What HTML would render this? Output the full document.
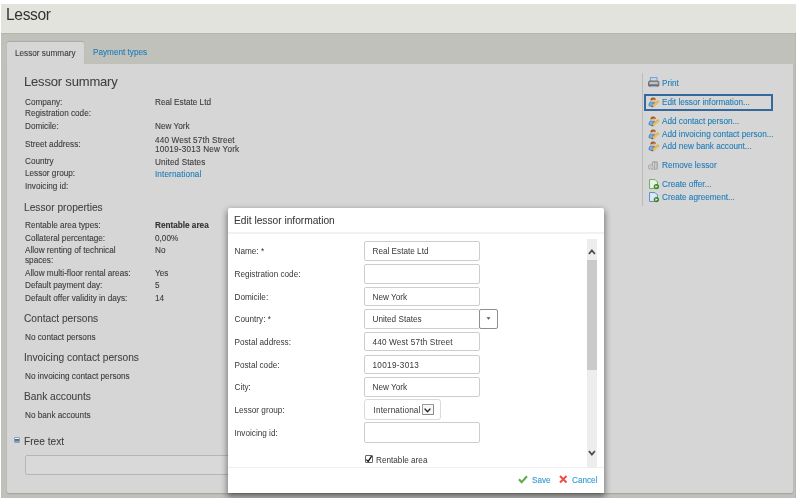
<!DOCTYPE html>
<html><head><meta charset="utf-8">
<style>
*{box-sizing:border-box;margin:0;padding:0}
html,body{width:799px;height:502px;overflow:hidden;background:#fff;font-family:"Liberation Sans",sans-serif;color:#444}
#root{position:absolute;left:0;top:0;width:799px;height:502px;will-change:transform;overflow:hidden}
.a{position:absolute}
.t{position:absolute;white-space:nowrap;font-size:8.2px;line-height:10px;color:#3c3c3c;-webkit-text-stroke:0.1px currentColor}
.l{color:#1f7db9}
.d{color:#363636;-webkit-text-stroke:0}
.h1{position:absolute;white-space:nowrap;font-size:13px;letter-spacing:-0.3px;line-height:16px;color:#404040;-webkit-text-stroke:0.06px currentColor}
.h2{position:absolute;white-space:nowrap;font-size:10.2px;line-height:12px;color:#404040;-webkit-text-stroke:0.06px currentColor}
.inp{position:absolute;background:#fff;border:1px solid #cdcdcd;border-radius:2px}
.act{position:absolute;white-space:nowrap;font-size:8.2px;line-height:10px;color:#1f7db9;-webkit-text-stroke:0.1px currentColor}
svg{position:absolute;overflow:visible}
</style></head><body><div id="root">
<div class="a" style="left:1px;top:4px;width:795px;height:28.5px;background:#e3e3de"></div>
<div class="t" style="left:6px;top:6.3px;font-size:15.6px;letter-spacing:-0.35px;line-height:18px;color:#333;-webkit-text-stroke:0">Lessor</div>
<div class="a" style="left:1px;top:32.5px;width:795px;height:465px;background:#c1c1bc;box-shadow:inset 0 1px 1px rgba(0,0,0,.06), inset -1px 0 1px rgba(0,0,0,.05)"></div>
<div class="a" style="left:7px;top:63.5px;width:785.5px;height:429.5px;background:#d6d6d6;border-radius:0 0 2px 2px;box-shadow:0 1px 1.5px rgba(0,0,0,.18)"></div>
<div class="a" style="left:7px;top:42px;width:77px;height:22px;background:#d6d6d6;border-radius:2px 2px 0 0;box-shadow:0 -0.5px 1px rgba(0,0,0,.12)"></div><div class="a" style="left:7px;top:63px;width:77px;height:2px;background:#d6d6d6"></div>
<div class="t" style="left:15px;top:49px">Lessor summary</div>
<div class="t l" style="left:93px;top:48px">Payment types</div>

<div class="h1" style="left:24px;top:73.6px;letter-spacing:-0.18px">Lessor summary</div>
<div class="t" style="left:25px;top:97.5px">Company:</div><div class="t" style="left:155px;top:97.5px">Real Estate Ltd</div>
<div class="t" style="left:25px;top:109px">Registration code:</div>
<div class="t" style="left:25px;top:122px">Domicile:</div><div class="t" style="left:155px;top:122px">New York</div>
<div class="t" style="left:25px;top:140px">Street address:</div><div class="t" style="left:155px;top:135.5px;letter-spacing:0.15px">440 West 57th Street</div>
<div class="t" style="left:155px;top:145px;letter-spacing:0.2px">10019-3013 New York</div>
<div class="t" style="left:25px;top:157px">Country</div><div class="t" style="left:155px;top:157.5px;letter-spacing:0.1px">United States</div>
<div class="t" style="left:25px;top:169px">Lessor group:</div><div class="t l" style="left:155px;top:169.5px;letter-spacing:0.1px">International</div>
<div class="t" style="left:25px;top:182px">Invoicing id:</div>

<div class="h2" style="left:24px;top:201.5px">Lessor properties</div>
<div class="t" style="left:25px;top:221px">Rentable area types:</div><div class="t" style="left:155px;top:221px;font-weight:bold;color:#333">Rentable area</div>
<div class="t" style="left:25px;top:233.5px">Collateral percentage:</div><div class="t" style="left:155px;top:233.5px">0,00%</div>
<div class="t" style="left:25px;top:246px">Allow renting of technical</div><div class="t" style="left:155px;top:246px">No</div>
<div class="t" style="left:25px;top:255.5px">spaces:</div>
<div class="t" style="left:25px;top:268.5px">Allow multi-floor rental areas:</div><div class="t" style="left:155px;top:268.5px">Yes</div>
<div class="t" style="left:25px;top:281px">Default payment day:</div><div class="t" style="left:155px;top:281px">5</div>
<div class="t" style="left:25px;top:293.5px">Default offer validity in days:</div><div class="t" style="left:155px;top:293.5px">14</div>

<div class="h2" style="left:24px;top:312.5px">Contact persons</div>
<div class="t" style="left:25px;top:333px">No contact persons</div>
<div class="h2" style="left:24px;top:351.5px">Invoicing contact persons</div>
<div class="t" style="left:25px;top:372px">No invoicing contact persons</div>
<div class="h2" style="left:24px;top:390.5px">Bank accounts</div>
<div class="t" style="left:25px;top:411px">No bank accounts</div>

<div class="a" style="left:13.8px;top:436.9px;width:6.1px;height:5.9px;border:1px solid #77a3d2;background:linear-gradient(#f4f4f4 0,#f4f4f4 25%,#4a4a4a 40%,#7a7a72 65%,#b8b8b0 100%);border-radius:1px"></div>
<div class="h2" style="left:24px;top:435.5px">Free text</div>
<div class="a" style="left:25px;top:455px;width:560px;height:19.5px;border:1px solid #b6b6b6;border-radius:2px;background:#d9d9d9"></div>

<!-- actions -->
<div class="a" style="left:642px;top:73px;width:1px;height:133px;background:#bbb"></div>
<div class="act" style="left:662px;top:79px">Print</div>
<div class="a" style="left:644px;top:94px;width:129px;height:16.5px;border:2px solid #35689d"></div>
<div class="act" style="left:662px;top:98px">Edit lessor information...</div>
<div class="act" style="left:662px;top:116.5px">Add contact person...</div>
<div class="act" style="left:662px;top:129.5px">Add invoicing contact person...</div>
<div class="act" style="left:662px;top:142px">Add new bank account...</div>
<div class="act" style="left:662px;top:161px">Remove lessor</div>
<div class="act" style="left:662px;top:180px">Create offer...</div>
<div class="act" style="left:662px;top:193px">Create agreement...</div>

<!-- dialog -->
<div class="a" style="left:227.5px;top:207.5px;width:376px;height:285px;background:#fff;border-radius:2px 2px 0 0;box-shadow:0 3px 6px 1px rgba(0,0,0,.45)"></div>
<div class="h2" style="left:234px;top:214.5px;color:#3a3a3a">Edit lessor information</div>
<div class="a" style="left:227.5px;top:232px;width:376px;height:2px;background:#f1f1f1"></div>

<div class="t d" style="left:234.5px;top:247px">Name: *</div>
<div class="t d" style="left:234.5px;top:270px">Registration code:</div>
<div class="t d" style="left:234.5px;top:292.5px">Domicile:</div>
<div class="t d" style="left:234.5px;top:315px">Country: *</div>
<div class="t d" style="left:234.5px;top:338px">Postal address:</div>
<div class="t d" style="left:234.5px;top:360.5px">Postal code:</div>
<div class="t d" style="left:234.5px;top:383px">City:</div>
<div class="t d" style="left:234.5px;top:406px">Lessor group:</div>
<div class="t d" style="left:234.5px;top:428.5px">Invoicing id:</div>

<div class="inp" style="left:364px;top:241px;width:116px;height:19.5px"></div>
<div class="t d" style="left:372.5px;top:247px">Real Estate Ltd</div>
<div class="inp" style="left:364px;top:264px;width:116px;height:19.5px"></div>
<div class="inp" style="left:364px;top:286.5px;width:116px;height:19.5px"></div>
<div class="t d" style="left:372.5px;top:292.5px">New York</div>
<div class="inp" style="left:364px;top:309px;width:116px;height:19.5px"></div>
<div class="t d" style="left:372.5px;top:315px">United States</div>
<div class="a" style="left:479px;top:309px;width:19px;height:19.5px;border:1px solid #8f8f8f;border-radius:2px;background:#fff"></div>
<svg style="left:486px;top:317px" width="5" height="3"><path d="M0.5 0.3 L4.5 0.3 L2.5 2.8 Z" fill="#555"/></svg>
<div class="inp" style="left:364px;top:331.5px;width:116px;height:19.5px"></div>
<div class="t d" style="left:372.5px;top:338px;letter-spacing:0.17px">440 West 57th Street</div>
<div class="inp" style="left:364px;top:354.5px;width:116px;height:19.5px"></div>
<div class="t d" style="left:372.5px;top:360.5px;letter-spacing:0.3px">10019-3013</div>
<div class="inp" style="left:364px;top:377px;width:116px;height:19.5px"></div>
<div class="t d" style="left:372.5px;top:383px">New York</div>
<div class="a" style="left:364px;top:399.2px;width:77px;height:20.4px;border:1.5px solid #dadada;border-radius:3px;background:#fff"></div>
<div class="t d" style="left:373.5px;top:406px;letter-spacing:0.15px">International</div>
<div class="a" style="left:422px;top:404.2px;width:11.5px;height:11.2px;border:1px solid #9a9a9a;border-right:1.3px solid #8a8a8a;border-bottom:1.6px solid #8a8a8a;background:#f7f7f7;border-radius:1px"></div>
<svg style="left:424px;top:407.5px" width="8" height="5"><path d="M0.6 0.6 L3.5 3.8 L6.4 0.6" fill="none" stroke="#222" stroke-width="1.4"/></svg>
<div class="inp" style="left:364px;top:422px;width:116px;height:20.5px"></div>
<div class="a" style="left:364.5px;top:454.5px;width:8.5px;height:8.5px;border:1px solid #666;border-radius:1px;background:#fff"></div>
<svg style="left:365px;top:455px" width="8" height="8"><path d="M1.3 4.6 L3.2 6.4 L6.6 1.2" fill="none" stroke="#111" stroke-width="1.3"/></svg>
<div class="t d" style="left:376px;top:456px">Rentable area</div>

<!-- scrollbar -->
<div class="a" style="left:587px;top:239px;width:10px;height:227.5px;background:#ededed"></div>
<div class="a" style="left:587px;top:260px;width:9.5px;height:110px;background:#cacaca"></div>
<svg style="left:588px;top:249.3px" width="8" height="6"><path d="M0.9 5 L3.9 1.4 L6.9 5" fill="none" stroke="#4a4a4a" stroke-width="1.7"/></svg>
<svg style="left:588px;top:450.3px" width="8" height="6"><path d="M0.9 1 L3.9 4.6 L6.9 1" fill="none" stroke="#4a4a4a" stroke-width="1.7"/></svg>

<div class="a" style="left:227.5px;top:466.5px;width:376px;height:1px;background:#efefef"></div>
<svg style="left:518px;top:474.8px" width="10" height="9"><path d="M1 4.3 L3.6 7.2 L9 1.2" fill="none" stroke="#62ab4a" stroke-width="2.1"/></svg>
<div class="act" style="left:532px;top:476px;color:#3199d4">Save</div>
<svg style="left:558.8px;top:475.4px" width="9" height="9"><path d="M1 1 L7.5 7.5 M7.5 1 L1 7.5" fill="none" stroke="#f04a4a" stroke-width="2"/></svg>
<div class="act" style="left:572px;top:476px;color:#3199d4">Cancel</div>

<!-- icons -->
<svg style="left:647.5px;top:77px" width="12" height="11">
 <rect x="2.4" y="0.6" width="6.6" height="5" fill="#c4d8ee" stroke="#6f9ad0" stroke-width="0.9"/>
 <rect x="0.5" y="4" width="10.4" height="5.4" rx="1.4" fill="#9a9a9a" stroke="#5c5c5c" stroke-width="0.8"/>
 <rect x="1.8" y="5.5" width="7.8" height="1.1" fill="#e2e2e2"/>
 <rect x="1.2" y="7.6" width="9" height="1.4" fill="#6a6a6a"/>
 <rect x="2.5" y="9.2" width="6.4" height="1.2" fill="#a9c8ea"/>
</svg>
<g></g>
<svg style="left:647.5px;top:96.5px" width="12" height="11" id="p1">
 <path d="M0.5 8.5 Q0.5 5 3.5 4.3 L6.5 4.3 Q7.5 6 6.5 9.5 L1.5 9.5 Z" fill="#4a88d6"/>
 <path d="M2 6 L4.5 5 L4 8.5 L1.5 8.5Z" fill="#6fb4ea"/>
 <ellipse cx="5" cy="3.6" rx="2.2" ry="1.6" fill="#e6b98e"/>
 <path d="M2.4 3.4 Q2.4 0.3 5.2 0.4 Q8 0.5 7.8 3.2 Q7 2.2 5.5 2.6 Q4 3 2.4 3.4Z" fill="#9b5a26"/>
 <path d="M4.2 9.4 L10.8 4" stroke="#dcb04e" stroke-width="2.6"/>
 <path d="M5.2 9.2 L10.6 4.8" stroke="#f0d070" stroke-width="0.8"/>
 <path d="M3.6 10 L4.8 9" stroke="#7a5424" stroke-width="1.4"/>
</svg>
<svg style="left:647.5px;top:115.5px" width="12" height="11">
 <path d="M0.5 8.5 Q0.5 5 3.5 4.3 L6.5 4.3 Q7.5 6 6.5 9.5 L1.5 9.5 Z" fill="#4a88d6"/>
 <path d="M2 6 L4.5 5 L4 8.5 L1.5 8.5Z" fill="#6fb4ea"/>
 <ellipse cx="5" cy="3.6" rx="2.2" ry="1.6" fill="#e6b98e"/>
 <path d="M2.4 3.4 Q2.4 0.3 5.2 0.4 Q8 0.5 7.8 3.2 Q7 2.2 5.5 2.6 Q4 3 2.4 3.4Z" fill="#9b5a26"/>
 <path d="M4.2 9.4 L10.8 4" stroke="#dcb04e" stroke-width="2.6"/>
 <path d="M5.2 9.2 L10.6 4.8" stroke="#f0d070" stroke-width="0.8"/>
 <path d="M3.6 10 L4.8 9" stroke="#7a5424" stroke-width="1.4"/>
</svg>
<svg style="left:647.5px;top:128.5px" width="12" height="11">
 <path d="M0.5 8.5 Q0.5 5 3.5 4.3 L6.5 4.3 Q7.5 6 6.5 9.5 L1.5 9.5 Z" fill="#4a88d6"/>
 <path d="M2 6 L4.5 5 L4 8.5 L1.5 8.5Z" fill="#6fb4ea"/>
 <ellipse cx="5" cy="3.6" rx="2.2" ry="1.6" fill="#e6b98e"/>
 <path d="M2.4 3.4 Q2.4 0.3 5.2 0.4 Q8 0.5 7.8 3.2 Q7 2.2 5.5 2.6 Q4 3 2.4 3.4Z" fill="#9b5a26"/>
 <path d="M4.2 9.4 L10.8 4" stroke="#dcb04e" stroke-width="2.6"/>
 <path d="M5.2 9.2 L10.6 4.8" stroke="#f0d070" stroke-width="0.8"/>
 <path d="M3.6 10 L4.8 9" stroke="#7a5424" stroke-width="1.4"/>
</svg>
<svg style="left:647.5px;top:141px" width="12" height="11">
 <path d="M0.5 8.5 Q0.5 5 3.5 4.3 L6.5 4.3 Q7.5 6 6.5 9.5 L1.5 9.5 Z" fill="#4a88d6"/>
 <path d="M2 6 L4.5 5 L4 8.5 L1.5 8.5Z" fill="#6fb4ea"/>
 <ellipse cx="5" cy="3.6" rx="2.2" ry="1.6" fill="#e6b98e"/>
 <path d="M2.4 3.4 Q2.4 0.3 5.2 0.4 Q8 0.5 7.8 3.2 Q7 2.2 5.5 2.6 Q4 3 2.4 3.4Z" fill="#9b5a26"/>
 <path d="M4.2 9.4 L10.8 4" stroke="#dcb04e" stroke-width="2.6"/>
 <path d="M5.2 9.2 L10.6 4.8" stroke="#f0d070" stroke-width="0.8"/>
 <path d="M3.6 10 L4.8 9" stroke="#7a5424" stroke-width="1.4"/>
</svg>
<svg style="left:648px;top:161px" width="11" height="9">
 <rect x="3.8" y="0.3" width="6.2" height="8.4" rx="1.6" fill="#a6a6a6"/>
 <path d="M5.6 1.8 V7.8 M7.9 1.8 V7.8" stroke="#e6e6e6" stroke-width="0.9"/>
 <circle cx="2.8" cy="5.9" r="2.7" fill="#a9a9a9"/>
 <circle cx="2.8" cy="5.9" r="1.3" fill="none" stroke="#e8e8e8" stroke-width="0.8"/>
</svg>
<svg style="left:649px;top:179px" width="11" height="11">
 <path d="M0.5 0.5 L6 0.5 L8.5 3 L8.5 9.5 L0.5 9.5 Z" fill="#e4f0dc" stroke="#6aa860" stroke-width="0.9"/>
 <path d="M2 3.2 H6 M2 5 H6.5 M2 6.8 H5" stroke="#fff" stroke-width="0.6" opacity=".7"/>
 <circle cx="7.4" cy="7.6" r="2.7" fill="#3f8a2c"/>
 <path d="M6.4 6.3 L8.9 7.6 L6.4 8.9Z" fill="#e8f4e0"/>
</svg>
<svg style="left:649px;top:191.5px" width="11" height="11">
 <path d="M0.5 0.5 L6 0.5 L8.5 3 L8.5 9.5 L0.5 9.5 Z" fill="#d7e3f4" stroke="#5a86c8" stroke-width="0.9"/>
 <path d="M2 3.2 H6 M2 5 H6.5 M2 6.8 H5" stroke="#fff" stroke-width="0.6" opacity=".7"/>
 <circle cx="7.4" cy="7.6" r="2.7" fill="#3f8a2c"/>
 <path d="M6.4 6.3 L8.9 7.6 L6.4 8.9Z" fill="#e8f4e0"/>
</svg>
<div class="a" style="left:0;top:497.5px;width:799px;height:5px;background:#fff"></div>
</div></body></html>
